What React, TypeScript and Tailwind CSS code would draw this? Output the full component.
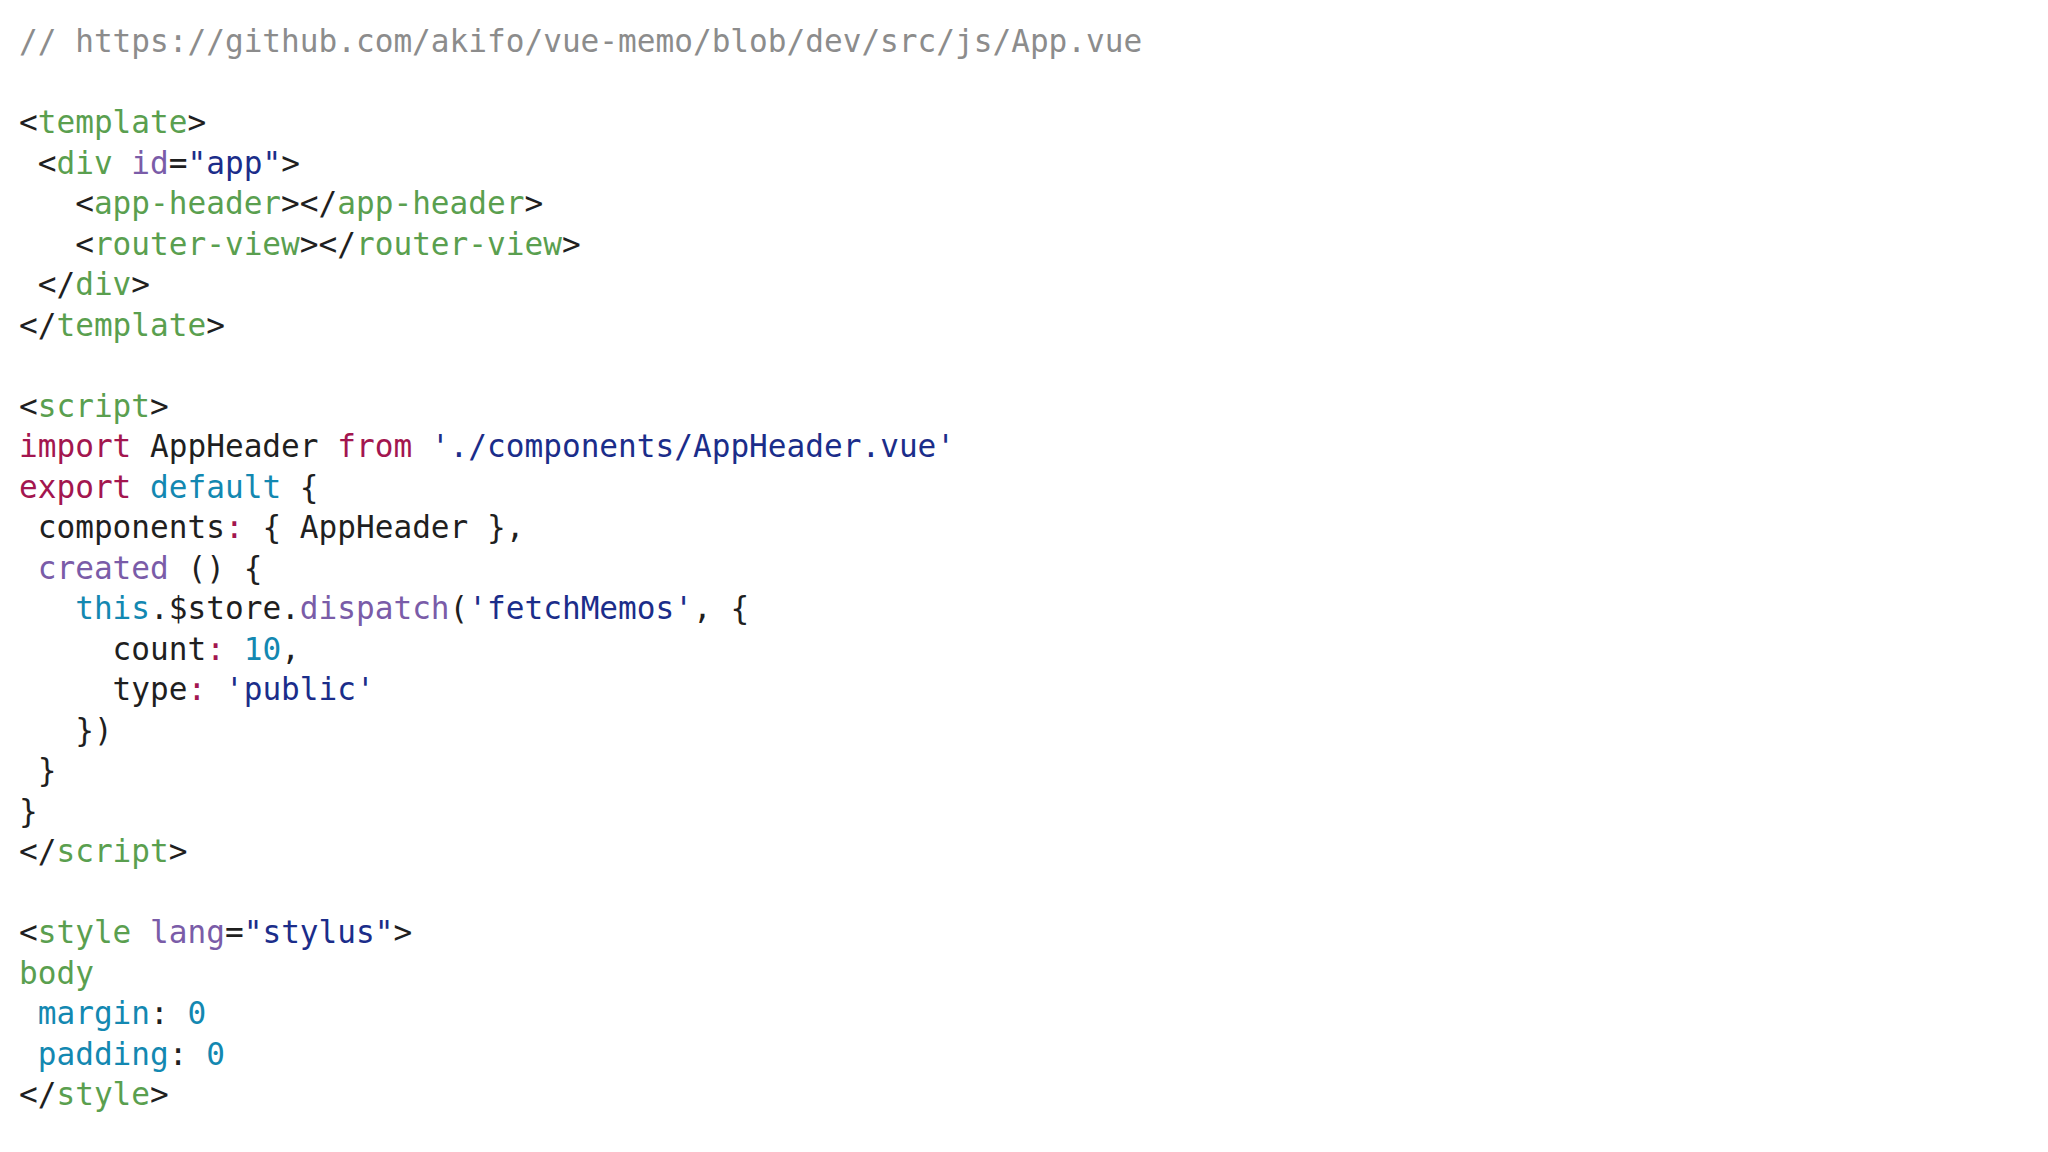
import React from "react";

type Seg = [string, string];

const C = {
  txt: "text-[#1f1f1f]",
  cmt: "text-[#8c8c8c]",
  tag: "text-[#5a9f4f]",
  attr: "text-[#7a5ca8]",
  str: "text-[#1b2d8a]",
  kw: "text-[#a3164f]",
  teal: "text-[#1388b1]",
};

const lines: Seg[][] = [
  [["// https://github.com/akifo/vue-memo/blob/dev/src/js/App.vue", C.cmt]],
  [],
  [["<", C.txt], ["template", C.tag], [">", C.txt]],
  [[" <", C.txt], ["div", C.tag], [" ", C.txt], ["id", C.attr], ["=", C.txt], ['"app"', C.str], [">", C.txt]],
  [["   <", C.txt], ["app-header", C.tag], ["></", C.txt], ["app-header", C.tag], [">", C.txt]],
  [["   <", C.txt], ["router-view", C.tag], ["></", C.txt], ["router-view", C.tag], [">", C.txt]],
  [[" </", C.txt], ["div", C.tag], [">", C.txt]],
  [["</", C.txt], ["template", C.tag], [">", C.txt]],
  [],
  [["<", C.txt], ["script", C.tag], [">", C.txt]],
  [["import", C.kw], [" AppHeader ", C.txt], ["from", C.kw], [" ", C.txt], ["'./components/AppHeader.vue'", C.str]],
  [["export", C.kw], [" ", C.txt], ["default", C.teal], [" {", C.txt]],
  [[" components", C.txt], [":", C.kw], [" { AppHeader },", C.txt]],
  [[" ", C.txt], ["created", C.attr], [" () {", C.txt]],
  [["   ", C.txt], ["this", C.teal], [".$store.", C.txt], ["dispatch", C.attr], ["(", C.txt], ["'fetchMemos'", C.str], [", {", C.txt]],
  [["     count", C.txt], [":", C.kw], [" ", C.txt], ["10", C.teal], [",", C.txt]],
  [["     type", C.txt], [":", C.kw], [" ", C.txt], ["'public'", C.str]],
  [["   })", C.txt]],
  [[" }", C.txt]],
  [["}", C.txt]],
  [["</", C.txt], ["script", C.tag], [">", C.txt]],
  [],
  [["<", C.txt], ["style", C.tag], [" ", C.txt], ["lang", C.attr], ["=", C.txt], ['"stylus"', C.str], [">", C.txt]],
  [["body", C.tag]],
  [[" ", C.txt], ["margin", C.teal], [": ", C.txt], ["0", C.teal]],
  [[" ", C.txt], ["padding", C.teal], [": ", C.txt], ["0", C.teal]],
  [["</", C.txt], ["style", C.tag], [">", C.txt]],
];

export default function App() {
  return (
    <div className="w-[2048px] h-[1152px] bg-white overflow-hidden">
      <div className="pl-[19px] pt-[21px] font-['DejaVu_Sans_Mono',monospace] text-[31.1px] leading-[40.5px] whitespace-pre">
        {lines.map((segs, i) => (
          <div key={i} className="h-[40.5px]">
            {segs.map(([t, c], j) => (
              <span key={j} className={c}>
                {t}
              </span>
            ))}
          </div>
        ))}
      </div>
    </div>
  );
}
